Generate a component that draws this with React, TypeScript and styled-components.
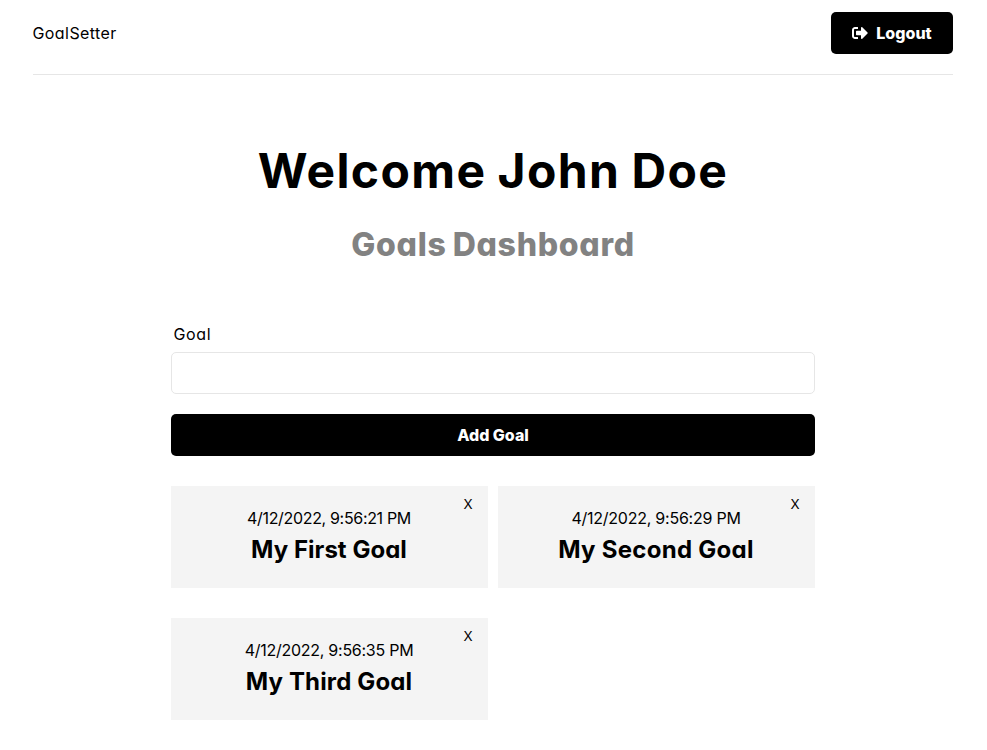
import React from "react";
import styled, { createGlobalStyle } from "styled-components";
import { FaSignOutAlt } from "react-icons/fa";

const GlobalStyle = createGlobalStyle`
  *, *::before, *::after { box-sizing: border-box; margin: 0; padding: 0; }
  body {
    background: #fff;
    color: #000;
    font-family: Inter, "Noto Sans", sans-serif;
    font-feature-settings: "cv11";
    font-size: 16px;
  }
`;

const Container = styled.div`
  width: 920px;
  margin: 0 34px 0 33px;
  text-align: center;
`;

const Header = styled.header`
  display: flex;
  justify-content: space-between;
  align-items: center;
  height: 75px;
  padding: 12px 0 20px;
  border-bottom: 1px solid #e6e6e6;
`;

const Logo = styled.a`
  margin-left: -0.5px;
  letter-spacing: 0.42px;
  color: #000;
`;

const Button = styled.button<{ $block?: boolean }>`
  display: flex;
  align-items: center;
  justify-content: center;
  gap: 8px;
  width: ${({ $block }) => ($block ? "100%" : "122px")};
  height: 42px;
  border: 0;
  border-radius: 5px;
  background: #000;
  color: #fff;
  font: 800 16px/20px Inter, sans-serif;
`;

const Heading = styled.section`
  padding-top: 60px;
`;

const Title = styled.h1`
  height: 72px;
  font-size: 48px;
  line-height: 72px;
  font-weight: 700;
  letter-spacing: 1.35px;
  word-spacing: -1.5px;
  white-space: nowrap;
`;

const Subtitle = styled.p`
  margin-top: 13px;
  height: 50px;
  font-size: 32px;
  line-height: 50px;
  font-weight: 800;
  letter-spacing: 0.7px;
  word-spacing: -1.5px;
  color: #828282;
`;

const Form = styled.form`
  width: 644px;
  margin: 52px auto 0;
`;

const Label = styled.label`
  display: block;
  margin: 0 0 6px 2.5px;
  height: 24px;
  line-height: 24px;
  letter-spacing: 0.65px;
  text-align: left;
`;

const Input = styled.input`
  display: block;
  width: 100%;
  height: 42px;
  margin-bottom: 20px;
  padding: 10px;
  border: 1px solid #e6e6e6;
  border-radius: 5px;
`;

const Goals = styled.section`
  display: grid;
  grid-template-columns: 1fr 1fr;
  gap: 30px 10px;
  width: 644px;
  margin: 30px auto 0;
`;

const Card = styled.article`
  position: relative;
  height: 102px;
  padding: 20px 1px 0 0;
  background: #f4f4f4;
`;

const Time = styled.div<{ $spacing: number }>`
  height: 24px;
  line-height: 24px;
  letter-spacing: ${({ $spacing }) => $spacing}px;
`;

const GoalName = styled.h2<{ $spacing: number }>`
  height: 40px;
  line-height: 40px;
  font-size: 24px;
  font-weight: 700;
  letter-spacing: ${({ $spacing }) => $spacing}px;
`;

const Close = styled.button`
  position: absolute;
  top: 8px;
  right: 15px;
  width: 10px;
  height: 20px;
  border: 0;
  background: none;
  color: #000;
  font: inherit;
  font-size: 13.33px;
  line-height: 20px;
`;

const goals = [
  { time: "4/12/2022, 9:56:21 PM", name: "My First Goal", ts: -0.33, ns: 0.03 },
  { time: "4/12/2022, 9:56:29 PM", name: "My Second Goal", ts: -0.24, ns: 0.28 },
  { time: "4/12/2022, 9:56:35 PM", name: "My Third Goal", ts: -0.26, ns: 0.15 },
];

export default function App() {
  return (
    <>
      <GlobalStyle />
      <Container>
        <Header>
          <Logo>GoalSetter</Logo>
          <Button type="button"><FaSignOutAlt size={16} />Logout</Button>
        </Header>
        <Heading>
          <Title>Welcome John Doe</Title>
          <Subtitle>Goals Dashboard</Subtitle>
        </Heading>
        <Form>
          <Label htmlFor="goal">Goal</Label>
          <Input id="goal" type="text" />
          <Button type="button" $block>Add Goal</Button>
        </Form>
        <Goals>
          {goals.map((g) => (
            <Card key={g.name}>
              <Time $spacing={g.ts}>{g.time}</Time>
              <GoalName $spacing={g.ns}>{g.name}</GoalName>
              <Close type="button">X</Close>
            </Card>
          ))}
        </Goals>
      </Container>
    </>
  );
}
